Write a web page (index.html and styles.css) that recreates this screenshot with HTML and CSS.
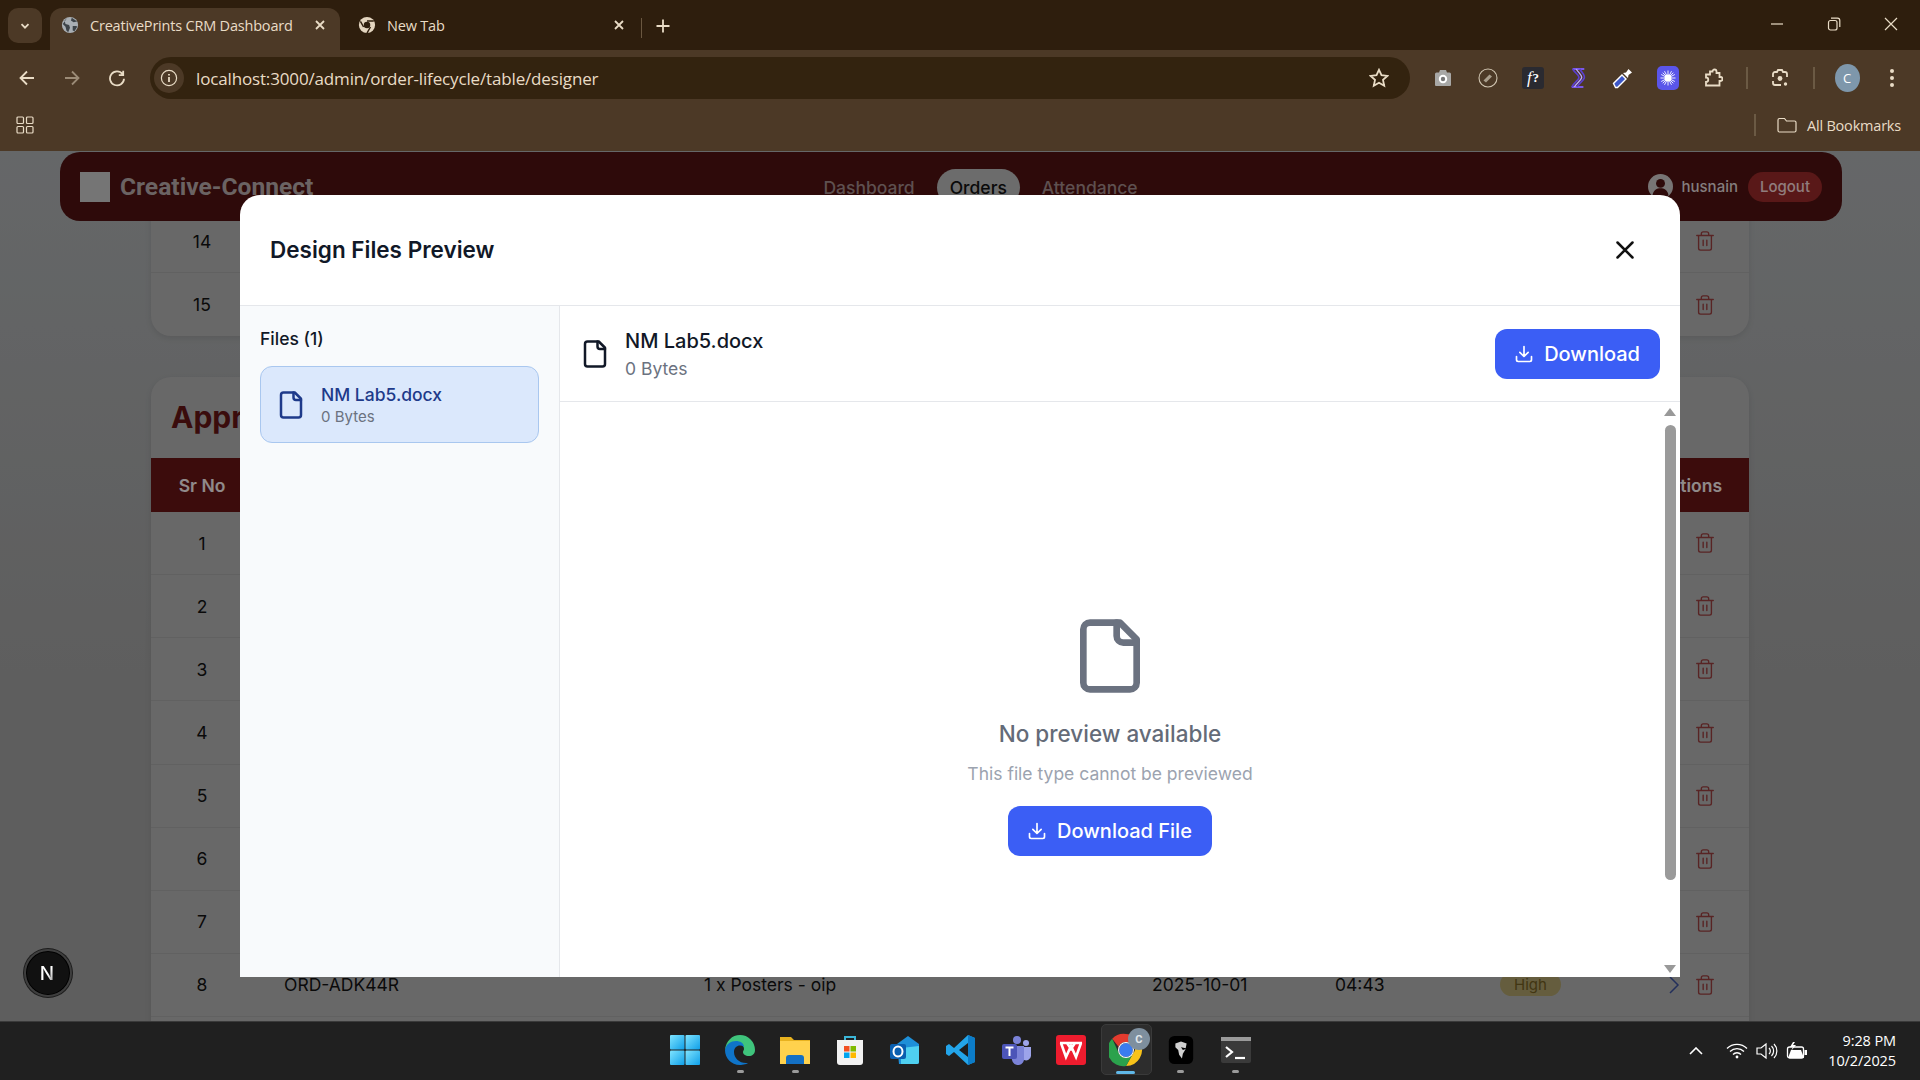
FILE: index.html
```html
<!DOCTYPE html>
<html lang="en">
<head>
<meta charset="utf-8">
<title>CreativePrints CRM Dashboard</title>
<link rel="stylesheet" href="styles.css">
</head>
<body>
<div class="screen">
  <header class="browser">
    <div class="tabstrip">
      <button class="tab-menu"><svg viewBox="0 0 12 12" width="12" height="12"><path d="M2.5 4.2 6 7.7l3.5-3.5" class="ln2"/></svg></button>
      <div class="tab tab-active">
        <svg class="favicon" viewBox="0 0 20 20" width="18" height="18"><circle cx="10" cy="10" r="9" fill="#a9afb4"/><path d="M7 2 4 5l1 4 4 1 1 3-2 5-2-2-1-4-3-3M12 2l-1 3 3 2 4-1M13 11l4 0 1 1-3 5-2-1z" fill="#3d4348"/></svg>
        <span class="tab-title">CreativePrints CRM Dashboard</span>
        <svg class="tab-x" viewBox="0 0 12 12" width="12" height="12"><path d="m2 2 8 8M10 2l-8 8" class="ln2"/></svg>
      </div>
      <div class="tab tab-idle">
        <svg class="favicon" viewBox="0 0 20 20" width="18" height="18"><circle cx="10" cy="10" r="9" fill="#e3d5bf"/><circle cx="10" cy="10" r="3.6" fill="#2e1e0d"/><path d="M10 5.5h7.5M6.2 12.2 2.7 6M13.8 12.2 10 19" stroke="#2e1e0d" stroke-width="1.6" fill="none"/></svg>
        <span class="tab-title">New Tab</span>
        <svg class="tab-x" viewBox="0 0 12 12" width="12" height="12"><path d="m2 2 8 8M10 2l-8 8" class="ln2"/></svg>
      </div>
      <span class="tab-sep"></span>
      <svg class="tab-plus" viewBox="0 0 16 16" width="16" height="16"><path d="M8 1.5v13M1.5 8h13" class="ln2"/></svg>
      <div class="window-controls">
        <svg viewBox="0 0 14 14" width="14" height="14"><path d="M1 7h12" class="ln1"/></svg>
        <svg viewBox="0 0 14 14" width="14" height="14"><rect x="1.5" y="3.5" width="8.5" height="9.5" rx="2" class="ln1"/><path d="M4 1.2h6.5a2.3 2.3 0 0 1 2.3 2.3V10" class="ln1"/></svg>
        <svg viewBox="0 0 14 14" width="14" height="14"><path d="m1 1 12 12M13 1 1 13" class="ln1"/></svg>
      </div>
    </div>
    <div class="toolbar">
      <div class="nav-buttons">
        <svg viewBox="0 0 18 18" width="18" height="18"><path d="M16 9H2.5M9 2.5 2.5 9 9 15.5" class="ln2"/></svg>
        <svg class="dim" viewBox="0 0 18 18" width="18" height="18"><path d="M2 9h13.5M9 2.5 15.5 9 9 15.5" class="ln2"/></svg>
        <svg viewBox="0 0 18 18" width="18" height="18"><path d="M14.6 5.2A7 7 0 1 0 16 9.7M15.2 1.8v4.4h-4.4" class="ln2"/></svg>
      </div>
      <div class="omnibox">
        <span class="site-info"><svg viewBox="0 0 18 18" width="18" height="18"><circle cx="9" cy="9" r="7.6" class="ln1"/><path d="M9 8v5M9 5v1.6" class="ln2"/></svg></span>
        <span class="url">localhost:3000/admin/order-lifecycle/table/designer</span>
        <svg class="star" viewBox="0 0 20 20" width="20" height="20"><path d="m10 1.8 2.5 5.4 5.9.7-4.4 4 1.2 5.8-5.2-3-5.2 3 1.2-5.8-4.4-4 5.9-.7z" class="ln2"/></svg>
      </div>
      <div class="extensions">
        <span class="ext"><svg viewBox="0 0 20 20" width="20" height="20"><path d="M2 6a1.500 1.500 0 0 1 1.500-1.500H6l1-2.500h6l1 2.500h2.500A1.500 1.500 0 0 1 18 6v11a1 1 0 0 1-1 1H3a1 1 0 0 1-1-1z" fill="#a8a8a6"/><circle cx="10" cy="11" r="4.200" fill="#fff"/><circle cx="10" cy="11" r="2.200" fill="#777"/></svg></span>
        <span class="ext"><svg viewBox="0 0 20 20" width="20" height="20"><circle cx="10" cy="10" r="9" fill="none" stroke="#cfc4b0" stroke-width="1.100"/><path d="m5.500 12.500 6-6 2.500 2-6 6z" fill="#a89d8b"/></svg></span>
        <span class="ext"><span class="ext-f"><i>f</i>?</span></span>
        <span class="ext"><svg viewBox="0 0 20 24" width="18" height="22"><path d="M4 2h13M3 22h13" stroke="#7a58e8" stroke-width="2" fill="none"/><path d="M4 2c3 5 8 7 7 10s-6 6-8 10" fill="none" stroke="#5b3fd0" stroke-width="1.800"/><path d="M8 2c3 5 7 7 6 10s-6 6-8 10" fill="none" stroke="#b9a6ff" stroke-width="1.500"/><path d="M12 2c3 5 6 7 5 10s-6 6-8 10" fill="none" stroke="#5b3fd0" stroke-width="1.800"/></svg></span>
        <span class="ext"><svg viewBox="0 0 22 22" width="22" height="22"><path d="M3.500 20.500 1.500 16.500 10 8l4 4-8.500 8.500z" fill="#3c57c8" stroke="#fff" stroke-width="1.400"/><path d="m11 6 3-.5 2.500-3.500 3.500 3.500-3.500 2.500-.5 3z" fill="#fff"/></svg></span>
        <span class="ext"><span class="ext-blue"><svg viewBox="0 0 16 16" width="16" height="16"><circle cx="8" cy="8" r="3.400" fill="#fff"/><path d="M8 .5v15M.5 8h15M2.700 2.700l10.600 10.600M13.300 2.700 2.700 13.300M4.500 1.200l7 13.600M11.500 1.200l-7 13.600M1.200 4.500l13.600 7M14.800 4.500l-13.600 7" stroke="#fff" stroke-width=".9"/></svg></span></span>
        <span class="ext"><svg viewBox="0 0 20 20" width="20" height="20"><path d="M7 3.500h2.500a2 2 0 0 1 4 0V5h3v4h1a2 2 0 0 1 0 4h-1v4.500H3V14a2.200 2.200 0 0 0 0-4.500V6.500h4z" class="ln2"/></svg></span>
        <span class="tool-sep"></span>
        <span class="ext"><svg viewBox="0 0 20 20" width="20" height="20"><path d="M3 9V6a2 2 0 0 1 2-2h2l1-2h4l1 2h2a2 2 0 0 1 2 2v3M3 13v2a2 2 0 0 0 2 2h6" class="ln2"/><circle cx="10" cy="10.500" r="2.400" fill="#e9dcc6"/><circle cx="15.500" cy="16" r="1.700" fill="#e9dcc6"/></svg></span>
        <span class="tool-sep"></span>
        <span class="ext"><span class="avatar">C</span></span>
        <span class="ext"><svg viewBox="0 0 6 22" width="6" height="22"><circle cx="3" cy="4" r="2" fill="#e9dcc6"/><circle cx="3" cy="11" r="2" fill="#e9dcc6"/><circle cx="3" cy="18" r="2" fill="#e9dcc6"/></svg></span>
      </div>
    </div>
    <div class="bookmarks">
      <svg viewBox="0 0 18 18" width="18" height="18"><rect x="1" y="1" width="6.500" height="6.500" rx="1" class="ln1"/><rect x="10.500" y="1" width="6.500" height="6.500" rx="1" class="ln1"/><rect x="1" y="10.500" width="6.500" height="6.500" rx="1" class="ln1"/><rect x="10.500" y="10.500" width="6.500" height="6.500" rx="1" class="ln1"/></svg>
      <div class="bookmarks-end">
        <span class="tool-sep"></span>
        <svg viewBox="0 0 20 16" width="20" height="16"><path d="M1 3a1.500 1.500 0 0 1 1.500-1.500h5L9.500 4h8A1.500 1.500 0 0 1 19 5.500v8a1.500 1.500 0 0 1-1.500 1.500h-15A1.500 1.500 0 0 1 1 13.500z" class="ln1"/></svg>
        <span class="all-bookmarks">All Bookmarks</span>
      </div>
    </div>
  </header>

  <main class="page">
    <nav class="app-nav">
      <div class="brand"><span class="brand-logo"></span><span class="brand-name">Creative-Connect</span></div>
      <div class="nav-links">
        <span class="nav-link">Dashboard</span>
        <span class="nav-link nav-link-active">Orders</span>
        <span class="nav-link">Attendance</span>
      </div>
      <div class="nav-user">
        <svg viewBox="0 0 28 28" width="25" height="25"><circle cx="14" cy="14" r="14" fill="#c9c4c4"/><circle cx="14" cy="10.500" r="5" fill="#4d1211"/><path d="M5 24c1-6 5-8 9-8s8 2 9 8a14 14 0 0 1-18 0z" fill="#4d1211"/></svg>
        <span class="nav-username">husnain</span>
        <span class="logout">Logout</span>
      </div>
    </nav>

    <section class="card card-first">
      <div class="row"><span class="cell-sr">14</span><span class="cell-actions"><svg class="trash" viewBox="0 0 24 24" width="22" height="22"><path d="M3 6h18M19 6v14c0 1-1 2-2 2H7c-1 0-2-1-2-2V6M8 6V4c0-1 1-2 2-2h4c1 0 2 1 2 2v2M10 11v6M14 11v6"/></svg></span></div>
      <div class="row row-last"><span class="cell-sr">15</span><span class="cell-actions"><svg class="trash" viewBox="0 0 24 24" width="22" height="22"><path d="M3 6h18M19 6v14c0 1-1 2-2 2H7c-1 0-2-1-2-2V6M8 6V4c0-1 1-2 2-2h4c1 0 2 1 2 2v2M10 11v6M14 11v6"/></svg></span></div>
    </section>

    <section class="card">
      <h2 class="card-title">Approved</h2>
      <div class="row row-head"><span class="cell-sr">Sr No</span><span class="cell-head-actions">Actions</span></div>
      <div class="row"><span class="cell-sr">1</span><span class="cell-actions"><svg class="trash" viewBox="0 0 24 24" width="22" height="22"><path d="M3 6h18M19 6v14c0 1-1 2-2 2H7c-1 0-2-1-2-2V6M8 6V4c0-1 1-2 2-2h4c1 0 2 1 2 2v2M10 11v6M14 11v6"/></svg></span></div>
      <div class="row"><span class="cell-sr">2</span><span class="cell-actions"><svg class="trash" viewBox="0 0 24 24" width="22" height="22"><path d="M3 6h18M19 6v14c0 1-1 2-2 2H7c-1 0-2-1-2-2V6M8 6V4c0-1 1-2 2-2h4c1 0 2 1 2 2v2M10 11v6M14 11v6"/></svg></span></div>
      <div class="row"><span class="cell-sr">3</span><span class="cell-actions"><svg class="trash" viewBox="0 0 24 24" width="22" height="22"><path d="M3 6h18M19 6v14c0 1-1 2-2 2H7c-1 0-2-1-2-2V6M8 6V4c0-1 1-2 2-2h4c1 0 2 1 2 2v2M10 11v6M14 11v6"/></svg></span></div>
      <div class="row"><span class="cell-sr">4</span><span class="cell-actions"><svg class="trash" viewBox="0 0 24 24" width="22" height="22"><path d="M3 6h18M19 6v14c0 1-1 2-2 2H7c-1 0-2-1-2-2V6M8 6V4c0-1 1-2 2-2h4c1 0 2 1 2 2v2M10 11v6M14 11v6"/></svg></span></div>
      <div class="row"><span class="cell-sr">5</span><span class="cell-actions"><svg class="trash" viewBox="0 0 24 24" width="22" height="22"><path d="M3 6h18M19 6v14c0 1-1 2-2 2H7c-1 0-2-1-2-2V6M8 6V4c0-1 1-2 2-2h4c1 0 2 1 2 2v2M10 11v6M14 11v6"/></svg></span></div>
      <div class="row"><span class="cell-sr">6</span><span class="cell-actions"><svg class="trash" viewBox="0 0 24 24" width="22" height="22"><path d="M3 6h18M19 6v14c0 1-1 2-2 2H7c-1 0-2-1-2-2V6M8 6V4c0-1 1-2 2-2h4c1 0 2 1 2 2v2M10 11v6M14 11v6"/></svg></span></div>
      <div class="row"><span class="cell-sr">7</span><span class="cell-actions"><svg class="trash" viewBox="0 0 24 24" width="22" height="22"><path d="M3 6h18M19 6v14c0 1-1 2-2 2H7c-1 0-2-1-2-2V6M8 6V4c0-1 1-2 2-2h4c1 0 2 1 2 2v2M10 11v6M14 11v6"/></svg></span></div>
      <div class="row">
        <span class="cell-sr">8</span>
        <span class="cell-order">ORD-ADK44R</span>
        <span class="cell-item">1 x Posters - oip</span>
        <span class="cell-date">2025-10-01</span>
        <span class="cell-time">04:43</span>
        <span class="cell-pri"><span class="pill-high">High</span></span>
        <span class="cell-actions">
          <svg class="chevron" viewBox="0 0 12 20" width="12" height="20"><path d="m2 2 8 8-8 8"/></svg>
          <svg class="trash" viewBox="0 0 24 24" width="22" height="22"><path d="M3 6h18M19 6v14c0 1-1 2-2 2H7c-1 0-2-1-2-2V6M8 6V4c0-1 1-2 2-2h4c1 0 2 1 2 2v2M10 11v6M14 11v6"/></svg>
        </span>
      </div>
      <div class="row"></div>
    </section>

    <div class="overlay">
      <div class="modal">
        <div class="modal-header">
          <h1 class="modal-title">Design Files Preview</h1>
          <svg class="modal-close" viewBox="0 0 24 24" width="30" height="30"><path d="M18 6 6 18M6 6l12 12"/></svg>
        </div>
        <div class="modal-body">
          <aside class="files">
            <div class="files-label">Files (1)</div>
            <div class="file-card">
              <svg class="file-icon file-icon-blue" viewBox="0 0 24 24" width="30" height="30"><path d="M15 2H6a2 2 0 0 0-2 2v16a2 2 0 0 0 2 2h12a2 2 0 0 0 2-2V7Z"/><path d="M14 2v4a2 2 0 0 0 2 2h4"/></svg>
              <div class="file-meta">
                <div class="file-name">NM Lab5.docx</div>
                <div class="file-size">0 Bytes</div>
              </div>
            </div>
          </aside>
          <section class="detail">
            <div class="detail-head">
              <div class="detail-file">
                <svg class="file-icon file-icon-dark" viewBox="0 0 24 24" width="30" height="30"><path d="M15 2H6a2 2 0 0 0-2 2v16a2 2 0 0 0 2 2h12a2 2 0 0 0 2-2V7Z"/><path d="M14 2v4a2 2 0 0 0 2 2h4"/></svg>
                <div class="detail-text">
                  <div class="detail-name">NM Lab5.docx</div>
                  <div class="detail-size">0 Bytes</div>
                </div>
              </div>
              <button class="btn btn-head"><svg class="dl" viewBox="0 0 24 24" width="20" height="20"><path d="M21 15v4a2 2 0 0 1-2 2H5a2 2 0 0 1-2-2v-4M7 10l5 5 5-5M12 15V3"/></svg>Download</button>
            </div>
            <div class="preview-wrap">
              <div class="preview">
                <svg class="file-icon file-icon-gray" viewBox="0 0 24 24" width="80" height="80"><path d="M15 2H6a2 2 0 0 0-2 2v16a2 2 0 0 0 2 2h12a2 2 0 0 0 2-2V7Z"/><path d="M14 2v4a2 2 0 0 0 2 2h4"/></svg>
                <div class="preview-title">No preview available</div>
                <div class="preview-sub">This file type cannot be previewed</div>
                <button class="btn btn-preview"><svg class="dl" viewBox="0 0 24 24" width="20" height="20"><path d="M21 15v4a2 2 0 0 1-2 2H5a2 2 0 0 1-2-2v-4M7 10l5 5 5-5M12 15V3"/></svg>Download File</button>
              </div>
              <div class="scrollbar">
                <span class="arrow-up"></span>
                <span class="thumb"></span>
                <span class="arrow-down"></span>
              </div>
            </div>
          </section>
        </div>
      </div>
      <div class="next-badge"><span class="next-n">N</span></div>
    </div>
  </main>

  <footer class="taskbar">
    <div class="task-icons">
      <span class="task-item"><svg viewBox="0 0 32 32" width="32" height="32"><defs><linearGradient id="w" x1="0" y1="0" x2="1" y2="1"><stop offset="0" stop-color="#7fe4ff"/><stop offset="1" stop-color="#0f9fe8"/></linearGradient></defs><rect x="1" y="1" width="14.500" height="14.500" rx="1" fill="url(#w)"/><rect x="16.500" y="1" width="14.500" height="14.500" rx="1" fill="url(#w)"/><rect x="1" y="16.500" width="14.500" height="14.500" rx="1" fill="url(#w)"/><rect x="16.500" y="16.500" width="14.500" height="14.500" rx="1" fill="url(#w)"/></svg></span>
      <span class="task-item is-open"><svg viewBox="0 0 32 32" width="32" height="32"><path d="M16 1a15 15 0 0 1 15 15c0 4-3 6-6 6-4 0-6-2-6-4 0-1 1-2 1-3 0-4-4-6-8-6-5 0-9 3-11 7C2 7 8 1 16 1z" fill="#3fc47c"/><path d="M1 16c1-6 6-9 11-9 4 0 8 2 8 6-4-3-10-1-10 5 0 6 5 11 12 11 1 0 3 0 4-1a15 15 0 0 1-10 3C7 31 1 24 1 16z" fill="#0f74c8"/></svg></span>
      <span class="task-item is-open"><svg viewBox="0 0 32 32" width="32" height="32"><path d="M1 3h11l3 3h16v24H1z" fill="#e8b21f"/><path d="M1 7h30v23H1z" fill="#ffd24d"/><path d="M7 30v-6a3 3 0 0 1 3-3h12a3 3 0 0 1 3 3v6z" fill="#1470c4"/></svg></span>
      <span class="task-item"><svg viewBox="0 0 32 32" width="32" height="32"><path d="M11 7V3h10v4" fill="none" stroke="#3bb6d8" stroke-width="2"/><path d="M3 6h26v22a3 3 0 0 1-3 3H6a3 3 0 0 1-3-3z" fill="#f2f2f2"/><rect x="10" y="12" width="5.500" height="5.500" fill="#f25022"/><rect x="16.500" y="12" width="5.500" height="5.500" fill="#7fba00"/><rect x="10" y="18.500" width="5.500" height="5.500" fill="#00a4ef"/><rect x="16.500" y="18.500" width="5.500" height="5.500" fill="#ffb900"/></svg></span>
      <span class="task-item"><svg viewBox="0 0 32 32" width="32" height="32"><path d="M8 10 19 2l11 8v18a2 2 0 0 1-2 2H10z" fill="#1e8fd8"/><path d="M12 14 30 12v16a2 2 0 0 1-2 2H12z" fill="#4fd0f0"/><rect x="1" y="10" width="16" height="15" rx="2" fill="#0a5fb0"/><ellipse cx="9" cy="17.500" rx="4.500" ry="5" fill="none" stroke="#fff" stroke-width="2"/></svg></span>
      <span class="task-item"><svg viewBox="0 0 32 32" width="32" height="32"><path d="M23 1 30 4v24l-7 3L9 18l-5 4-3-2v-8l3-2 5 4z" fill="#23a5ea"/><path d="M23 9v14l-9-7z" fill="#1e1e1e"/><path d="M23 1 30 4v24l-7 3z" fill="#0c7cc8"/></svg></span>
      <span class="task-item"><svg viewBox="0 0 32 32" width="32" height="32"><circle cx="17" cy="6" r="4" fill="#7b83d8"/><circle cx="26" cy="9" r="3" fill="#9da4ea"/><path d="M21 13h10v9a5 5 0 0 1-7 4z" fill="#9da4ea"/><path d="M9 12h15v12a6 6 0 0 1-12 2z" fill="#7b83d8"/><rect x="2" y="10" width="15" height="15" rx="2" fill="#4c55b8"/><path d="M5.500 13.500h8M9.500 13.500v8.500" stroke="#fff" stroke-width="2"/></svg></span>
      <span class="task-item"><svg viewBox="0 0 32 32" width="32" height="32"><rect width="30" height="30" x="1" y="1" rx="3" fill="#ee1c2e"/><path d="M5 9h22M6 9l5 14 5-11 5 11 5-14M12 9l4 6 4-6" fill="none" stroke="#fff" stroke-width="2.600"/></svg></span>
      <span class="task-item task-active"><span class="chrome-wrap"><svg viewBox="0 0 32 32" width="34" height="34"><path d="M16 1a15 15 0 0 1 13 7.500H16a7.500 7.500 0 0 0-7 4.500L3 5.500A15 15 0 0 1 16 1z" fill="#e33b2e"/><path d="M29 8.500A15 15 0 0 1 16 31l6.500-11.500A7.500 7.500 0 0 0 22 8.500z" fill="#f9c31a"/><path d="M3 5.500 9.500 19.500A7.500 7.500 0 0 0 22.500 19.500L16 31A15 15 0 0 1 3 5.500z" fill="#2ba24c"/><circle cx="16" cy="16" r="6.500" fill="#3a7cf0"/><circle cx="16" cy="16" r="7" fill="none" stroke="#fff" stroke-width="1"/></svg><span class="chrome-badge">C</span></span></span>
      <span class="task-item is-open"><svg viewBox="0 0 32 32" width="30" height="30"><rect x="3" y="1" width="26" height="30" rx="6" fill="#000"/><path d="M10 9l6-2 6 2-1 5-5-1 2 3 3-1-3 5-1 5-3-4-1-5-3-3z" fill="#cfcfcf"/></svg></span>
      <span class="task-item is-open"><svg viewBox="0 0 32 32" width="32" height="32"><rect x="1" y="3" width="30" height="26" rx="2" fill="#3a3a3a"/><rect x="1" y="3" width="30" height="4" fill="#9a9a9a"/><path d="m6 13 6 5-6 5" fill="none" stroke="#fff" stroke-width="2.200"/><path d="M15 24h10" stroke="#fff" stroke-width="2.200"/></svg></span>
    </div>
    <div class="tray">
      <svg viewBox="0 0 14 8" width="14" height="8"><path d="m1 7 6-6 6 6" fill="none" stroke="#fff" stroke-width="1.600"/></svg>
      <svg class="tray-wifi" viewBox="0 0 22 16" width="22" height="16"><path d="M1 5.500a14 14 0 0 1 20 0M4 8.500a10 10 0 0 1 14 0M7 11.500a5.500 5.500 0 0 1 8 0" fill="none" stroke="#fff" stroke-width="1.300"/><circle cx="11" cy="14" r="1.400" fill="#fff"/></svg>
      <svg class="tray-vol" viewBox="0 0 22 18" width="22" height="18"><path d="M1 6h4l5-4v14l-5-4H1z" fill="none" stroke="#fff" stroke-width="1.200"/><path d="M13 6a4 4 0 0 1 0 6M15.500 4a7 7 0 0 1 0 10M18 2a10 10 0 0 1 0 14" fill="none" stroke="#fff" stroke-width="1.200"/></svg>
      <svg class="tray-bat" viewBox="0 0 22 18" width="22" height="18"><rect x="1.500" y="5" width="16" height="11" rx="2" fill="none" stroke="#fff" stroke-width="1.300"/><path d="M2 16 5 8h10l3 8z" fill="#fff"/><rect x="18.500" y="8" width="2.500" height="5" fill="#fff"/><path d="m7 0-3 5h3l-2 4 5-6H7l2-3z" fill="#fff"/></svg>
      <div class="clock"><div>9:28 PM</div><div>10/2/2025</div></div>
    </div>
  </footer>
</div>
</body>
</html>
```

FILE: styles.css
```css
* { box-sizing: border-box; }
html, body { margin: 0; padding: 0; }
body { font-family: Inter, "Liberation Sans", sans-serif; }
button { font-family: inherit; border: 0; }
.screen { width: 1920px; height: 1080px; display: flex; flex-direction: column; overflow: hidden; background: #202020; }

/* browser chrome */
.browser { height: 151px; flex: none; background: #4c3926; color: #e9dcc6; font-family: "Open Sans", "Noto Sans", sans-serif; }
.ln1 { fill: none; stroke: #e9dcc6; stroke-width: 1.2; }
.ln2 { fill: none; stroke: #e9dcc6; stroke-width: 1.8; }
.dim { opacity: .5; }
.tabstrip { height: 50px; background: #2e1e0d; display: flex; align-items: flex-start; padding: 8px 0 0 8px; position: relative; }
.tab-menu { width: 34px; height: 35px; border-radius: 10px; background: #4c3926; display: flex; align-items: center; justify-content: center; padding: 0; }
.tab { height: 42px; display: flex; align-items: center; font-size: 14.500px; letter-spacing: -.2px; }
.tab-active { width: 290px; margin-left: 8px; background: #4c3926; border-radius: 12px 12px 0 0; padding: 0 14px 8px 11px; }
.tab-idle { width: 299px; padding: 0 14.500px 8px 18px; }
.favicon { flex: none; margin-right: 11px; }
.tab-title { flex: 1; white-space: nowrap; }
.tab-x { flex: none; margin-top: -1px; }
.tab-sep { width: 1px; height: 20px; background: #6a5740; margin: 10px 0 0 2px; }
.tab-plus { margin: 10px 0 0 12.500px; }
.window-controls { margin-left: auto; display: flex; gap: 43px; padding: 9px 22px 0 0; }

.toolbar { height: 50px; display: flex; align-items: center; padding: 6px 0 0 18px; }
.nav-buttons { width: 132px; display: flex; gap: 27px; flex: none; }
.omnibox { width: 1260px; height: 42px; flex: none; border-radius: 21px; background: #33230f; display: flex; align-items: center; padding: 0 21px 0 4px; }
.site-info { width: 30px; height: 30px; border-radius: 50%; background: #4c3926; display: flex; align-items: center; justify-content: center; margin-right: 12px; }
.url { flex: 1; font-size: 17px; letter-spacing: -.15px; white-space: nowrap; }
.star { flex: none; }
.extensions { flex: 1; display: flex; align-items: center; padding-left: 10.500px; }
.ext { width: 45px; flex: none; display: flex; align-items: center; justify-content: center; }
.extensions .tool-sep { margin: 0 10px; }
.ext-f { width: 22px; height: 22px; background: #2a2a30; border-radius: 3px; color: #fff; font: 700 13px "Liberation Serif", serif; display: flex; align-items: center; justify-content: center; }
.ext-f i { font-size: 17px; font-weight: 400; margin-right: 1px; }
.ext-blue { width: 22px; height: 24px; border-radius: 5px; background: #5a55ea; display: flex; align-items: center; justify-content: center; }
.tool-sep { width: 2px; height: 22px; background: #6b5a44; flex: none; }
.avatar { width: 25px; height: 28px; border-radius: 50%; background: #7e97ab; color: #fff; font-size: 13px; display: flex; align-items: center; justify-content: center; }
.bookmarks { height: 51px; display: flex; align-items: center; justify-content: space-between; padding: 0 19px 1px 16px; }
.bookmarks-end { display: flex; align-items: center; gap: 18px; }
.bookmarks-end .tool-sep { margin-right: 3px; }
.all-bookmarks { font-size: 14.500px; letter-spacing: -.2px; margin-left: -8px; white-space: nowrap; }

/* dimmed application page */
.page { flex: 1; position: relative; overflow: hidden; padding: 1px 78px 0 60px; background: linear-gradient(#a9acae, #9d9d9d 60%); }
.app-nav { position: relative; z-index: 1; height: 69px; border-radius: 20px; background: #4d1211; display: grid; grid-template-columns: 1fr auto 1fr; align-items: center; padding: 0 20px; color: #9d8585; }
.brand { display: flex; align-items: center; gap: 10px; }
.brand-logo { width: 30px; height: 30px; background: #c4c4c4; }
.brand-name { font: 700 24.600px Roboto, "Liberation Sans", sans-serif; color: #b2a5a5; }
.nav-links { display: flex; gap: 22px; align-items: center; font-size: 17.500px; font-weight: 500; margin-left: 59px; margin-top: 2px; }
.nav-link-active { height: 37px; padding: 0 13px; border-radius: 19px; background: #b4b4b4; display: flex; align-items: center; color: #111; }
.nav-user { display: flex; justify-content: flex-end; align-items: center; gap: 8px; font-size: 15px; font-weight: 500; color: #dcd0d0; }
.nav-username { margin-right: 2px; }
.logout { height: 30px; padding: 0 12px; border-radius: 15px; background: #952828; display: flex; align-items: center; color: #f0d0d0; }

.card { margin: 41px 93px 0 91px; background: #aeaeae; border-radius: 20px; box-shadow: 0 2px 6px rgba(0,0,0,.1); overflow: hidden; }
.card-first { margin-top: -11px; border-radius: 0 0 20px 20px; }
.card-title { margin: 0; height: 81px; padding: 17px 0 0 20px; font-size: 30px; font-weight: 700; line-height: 46px; color: #621414; }
.row { height: 63.100px; display: grid; grid-template-columns: 100px 389px 265px 431px 154px 130px 129px; align-items: center; border-bottom: 1px solid #a2a2a2; font-size: 17.500px; color: #111; }
.row-last { border-bottom: 0; }
.row-head { height: 54px; background: #651414; color: #f0e6e6; font-weight: 600; border: 0; }
.cell-sr { grid-column: 1; text-align: center; padding-left: 2px; }
.cell-order { padding-left: 33px; }
.cell-item { text-align: center; padding-right: 5px; }
.cell-date { padding-left: 247px; }
.cell-time { margin-left: -1px; }
.cell-pri { padding-left: 10px; }
.pill-high { display: inline-block; padding: 2px 14px; border-radius: 14px; background: #a89c68; color: #6e5a1e; font-size: 15px; }
.cell-actions { grid-column: 7; display: flex; justify-content: flex-end; align-items: center; gap: 14px; padding-right: 33px; }
.cell-head-actions { grid-column: 7; justify-self: end; padding-right: 27px; }
.trash { fill: none; stroke: #933c3c; stroke-width: 1.500; stroke-linecap: round; stroke-linejoin: round; }
.chevron { fill: none; stroke: #3a4f98; stroke-width: 1.500; }

/* overlay + modal */
.overlay { position: absolute; inset: 0; z-index: 2; background: rgba(0,0,0,.4); padding: 44px 240px 0; }
.modal { height: 782px; background: #fff; border-radius: 20px 20px 0 0; display: flex; flex-direction: column; color: #111827; }
.modal-header { height: 111px; flex: none; border-bottom: 1px solid #e5e7eb; display: flex; align-items: center; justify-content: space-between; padding: 0 40px 0 30px; }
.modal-title { margin: -2px 0 0; font-size: 22.500px; font-weight: 600; }
.modal-close { fill: none; stroke: #111; stroke-width: 2; stroke-linecap: round; stroke-linejoin: round; }
.modal-body { flex: 1; display: flex; min-height: 0; }
.files { width: 320px; flex: none; background: #f8fafc; border-right: 1px solid #e5e7eb; padding: 20px; }
.files-label { font-size: 17.500px; font-weight: 500; line-height: 25px; margin-bottom: 15px; }
.file-card { height: 77px; border: 1px solid #a9c7ef; border-radius: 12px; background: #dbe8fc; display: flex; align-items: center; gap: 15px; padding-left: 15px; }
.file-icon { flex: none; fill: none; stroke-width: 2; stroke-linecap: round; stroke-linejoin: round; }
.file-icon-blue { stroke: #1e3a8a; }
.file-icon-dark { stroke: #111827; }
.file-icon-gray { stroke: #6b7280; }
.file-name { font-size: 17.500px; font-weight: 500; line-height: 25px; color: #1e3a8a; }
.file-size { font-size: 15px; line-height: 20px; color: #6b7280; }
.detail { flex: 1; min-width: 0; display: flex; flex-direction: column; }
.detail-head { height: 96px; flex: none; border-bottom: 1px solid #e5e7eb; display: flex; align-items: center; justify-content: space-between; padding: 0 20px; }
.detail-file { display: flex; align-items: center; gap: 15px; }
.detail-text { margin-top: 2px; }
.detail-name { font-size: 20px; font-weight: 500; line-height: 28px; }
.detail-size { font-size: 17.500px; line-height: 26px; margin-top: 1px; color: #6b7280; }
.btn { height: 50px; border-radius: 12px; background: #3b5ef5; color: #fff; display: flex; align-items: center; gap: 10px; font-size: 20px; font-weight: 500; }
.btn-head { padding: 0 20px 0 19px; }
.btn-preview { padding: 0 20px 0 19px; }
.dl { fill: none; stroke: #fff; stroke-width: 2; stroke-linecap: round; stroke-linejoin: round; }
.preview-wrap { flex: 1; min-height: 0; display: flex; }
.preview { flex: 1; display: flex; flex-direction: column; align-items: center; padding-top: 214px; }
.preview-title { margin-top: 22px; font-size: 22.500px; font-weight: 500; line-height: 32px; color: #646b78; }
.preview-sub { margin-top: 11px; font-size: 17.500px; line-height: 26px; color: #9ca3af; }
.btn-preview { margin-top: 18.500px; }
.scrollbar { width: 20px; flex: none; display: flex; flex-direction: column; align-items: center; padding: 6px 0 4px 0; }
.arrow-up { width: 0; height: 0; border: 6.500px solid transparent; border-top: 0; border-bottom: 8px solid #999; }
.thumb { width: 11px; height: 455px; margin-top: 9px; border-radius: 6px; background: #9a9a9a; }
.arrow-down { width: 0; height: 0; border: 6.500px solid transparent; border-bottom: 0; border-top: 8px solid #999; margin-top: auto; }
.next-badge { position: absolute; left: 24px; top: 798px; width: 48px; height: 48px; border-radius: 50%; background: #111; border: 2px solid #3e3e3e; box-shadow: 0 0 0 1px #1c1c1c, inset 0 0 0 1px #000; display: flex; align-items: center; justify-content: center; }
.next-n { font-size: 19px; font-weight: 500; margin-left: -2px; background: linear-gradient(120deg, #fff 55%, #777); -webkit-background-clip: text; background-clip: text; color: transparent; }

/* windows taskbar */
.taskbar { height: 59px; flex: none; background: #202020; position: relative; display: flex; align-items: center; justify-content: flex-end; padding-right: 24px; border-top: 1px solid #3a3a3a; }
.task-icons { position: absolute; left: 657.500px; top: -1px; height: 58px; display: flex; }
.task-item { width: 55.100px; height: 58px; display: flex; align-items: center; justify-content: center; position: relative; }
.is-open::after { content: ""; position: absolute; left: 24px; bottom: 6px; width: 7px; height: 3px; border-radius: 2px; background: #9a9a9a; }
.task-active::before { content: ""; position: absolute; left: 3px; top: 3px; width: 49px; height: 49px; border-radius: 5px; background: #2d2d2d; border: 1px solid #3a3a3a; }
.task-active::after { content: ""; position: absolute; left: 18px; bottom: 5px; width: 19px; height: 3px; border-radius: 2px; background: #60b8e8; }
.chrome-wrap { position: relative; display: flex; }
.chrome-badge { position: absolute; right: -7px; top: -5px; width: 22px; height: 22px; border-radius: 50%; background: #7e8f9e; color: #e0e6ea; font: 700 11px Roboto, sans-serif; display: flex; align-items: center; justify-content: center; }
.tray { display: flex; align-items: center; color: #fff; }
.tray-wifi { margin-left: 23px; }
.tray-vol { margin-left: 8px; }
.tray-bat { margin-left: 8px; }
.clock { margin-left: 20px; text-align: right; font: 14.500px/20px "Open Sans", sans-serif; letter-spacing: -.1px; }
```
